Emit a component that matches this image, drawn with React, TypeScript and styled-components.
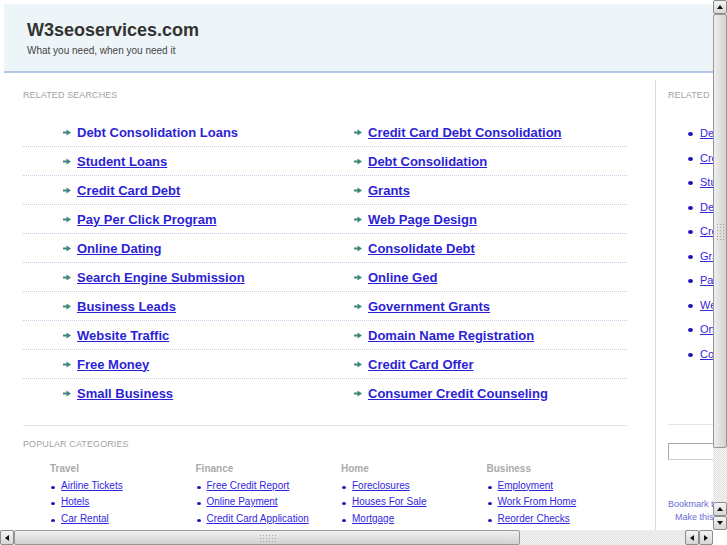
import React from "react";
import styled, { createGlobalStyle } from "styled-components";

// styles
const GlobalStyle = createGlobalStyle`
  html, body {
    margin: 0;
    padding: 0;
    overflow: hidden;
    background: #ffffff;
  }
  body {
    font-family: "Liberation Sans", Arial, sans-serif;
  }
`;

const Window = styled.div`
  display: grid;
  grid-template-columns: 713px 14px;
  grid-template-rows: 530px 15px;
  width: 727px;
  height: 545px;
  background: #ffffff;
`;

const Viewport = styled.div`
  overflow: hidden;
  position: relative;
`;

const Page = styled.div`
  width: 900px;
`;

const Header = styled.header`
  margin: 4px 0 0 4px;
  height: 69px;
  padding: 16px 0 0 23px;
  box-sizing: border-box;
  background: #eef5f8;
  border-bottom: 2px solid #b6c8e9;
`;

const SiteTitle = styled.h1`
  margin: 0;
  font-size: 18px;
  font-weight: 700;
  color: #333333;
  line-height: normal;
`;

const Tagline = styled.p`
  margin: 4px 0 0;
  font-size: 10px;
  color: #444444;
`;

const Columns = styled.div`
  display: flex;
  margin-top: 7px;
`;

const Main = styled.main`
  width: 655px;
  flex: none;
  box-sizing: border-box;
  padding: 10px 28px 0 23px;
`;

const Sidebar = styled.aside`
  width: 240px;
  min-height: 460px;
  border-left: 1px solid #d5def0;
  padding: 10px 0 0 12px;
`;

const SectionLabel = styled.div`
  font-size: 9px;
  letter-spacing: 0.1px;
  text-transform: uppercase;
  color: #a3a3a3;
`;

const SearchRows = styled.div`
  margin-top: 18px;
`;

const SearchRow = styled.div<{ $last?: boolean }>`
  display: grid;
  grid-template-columns: 291px 1fr;
  height: 28px;
  padding-left: 40px;
  border-bottom: 1px dotted ${(p) => (p.$last ? "transparent" : "#c2d0ea")};
`;

const SearchCell = styled.div`
  display: flex;
  align-items: center;
  gap: 6px;
`;

const SearchLink = styled.a<{ $plain?: boolean }>`
  font-size: 13px;
  font-weight: 700;
  color: #2c1fd6;
  text-decoration: ${(p) => (p.$plain ? "none" : "underline")};
  white-space: nowrap;
`;

const Rule = styled.div`
  height: 1px;
  background: #dde6ef;
`;

const MainRule = styled(Rule)`
  margin-top: 17px;
`;

const PopularLabel = styled(SectionLabel)`
  margin-top: 13px;
`;

const CategoryGrid = styled.div`
  display: grid;
  grid-template-columns: repeat(4, 145.5px);
  padding-left: 27px;
  margin-top: 12px;
`;

const CategoryTitle = styled.div`
  font-size: 10px;
  font-weight: 700;
  color: #aaaaaa;
  line-height: 16.5px;
`;

const CategoryList = styled.ul`
  list-style: none;
  margin: 0;
  padding: 0;
`;

const CategoryItem = styled.li`
  position: relative;
  padding-left: 11px;
  line-height: 16.5px;
  font-size: 10px;

  &::before {
    content: "";
    position: absolute;
    left: 1px;
    top: 8px;
    width: 4px;
    height: 3px;
    border-radius: 50%;
    background: #1d14b8;
  }
`;

const SmallLink = styled.a`
  color: #3326df;
  text-decoration: underline;
  white-space: nowrap;
`;

const SideList = styled.ul`
  list-style: none;
  margin: 21px 0 0;
  padding: 0 0 0 20px;
`;

const SideItem = styled.li`
  position: relative;
  padding-left: 12px;
  height: 24.5px;
  line-height: 24.5px;
  font-size: 11px;

  &::before {
    content: "";
    position: absolute;
    left: 0;
    top: 11px;
    width: 5px;
    height: 4px;
    border-radius: 50%;
    background: #1d14b8;
  }
`;

const SideRule = styled(Rule)`
  margin-top: 58px;
`;

const SearchInput = styled.input`
  display: block;
  margin-top: 18px;
  width: 160px;
  height: 17px;
  box-sizing: border-box;
  border: 1px solid #a9a9a9;
  border-bottom-color: #cfcfcf;
  padding: 0 3px;
  font-family: inherit;
  font-size: 11px;
`;

const BookmarkLine = styled.div<{ $indent?: number }>`
  font-size: 9px;
  line-height: 13px;
  color: #6d6bd9;
  padding-left: ${(p) => p.$indent ?? 0}px;
  white-space: nowrap;
`;

const BookmarkBlock = styled.div`
  margin-top: 38px;
`;

// scrollbars
const VScroll = styled.div`
  display: flex;
  flex-direction: column;
  background: repeating-conic-gradient(#e3e3e3 0 25%, #f3f3f3 0 50%) 0 0 / 2px 2px;
`;

const HScroll = styled.div`
  display: flex;
  background: repeating-conic-gradient(#e3e3e3 0 25%, #f3f3f3 0 50%) 0 0 / 2px 2px;
`;

const Spacer = styled.div`
  flex: 1;
`;

const Corner = styled.div`
  background: #ffffff;
`;

type Dir = "up" | "down" | "left" | "right";

const triangle = (dir: Dir) => {
  switch (dir) {
    case "up":
      return "border-width: 0 3.5px 4px 3.5px; border-bottom-color: #111;";
    case "down":
      return "border-width: 4px 3.5px 0 3.5px; border-top-color: #111;";
    case "left":
      return "border-width: 3.5px 4px 3.5px 0; border-right-color: #111;";
    default:
      return "border-width: 3.5px 0 3.5px 4px; border-left-color: #111;";
  }
};

const ScrollButton = styled.div<{ $dir: Dir }>`
  flex: none;
  width: 14px;
  height: ${(p) => (p.$dir === "left" || p.$dir === "right" ? "15px" : "14px")};
  box-sizing: border-box;
  border: 1px solid #8d8d8d;
  border-radius: 2px;
  background: linear-gradient(#f5f5f5, #d6d6d6);
  display: flex;
  align-items: center;
  justify-content: center;

  &::after {
    content: "";
    width: 0;
    height: 0;
    border-style: solid;
    border-color: transparent;
    ${(p) => triangle(p.$dir)}
  }
`;

const Thumb = styled.div<{ $horizontal?: boolean; $size: number }>`
  flex: none;
  box-sizing: border-box;
  ${(p) => (p.$horizontal ? `width: ${p.$size}px;` : `height: ${p.$size}px;`)}
  border: 1px solid #979797;
  border-radius: 2px;
  display: flex;
  align-items: center;
  justify-content: center;
  background: ${(p) =>
    p.$horizontal
      ? "linear-gradient(#efefef, #d2d2d2)"
      : "linear-gradient(to right, #efefef, #d2d2d2)"};
`;

const Grip = styled.div<{ $horizontal?: boolean }>`
  width: ${(p) => (p.$horizontal ? "17px" : "8px")};
  height: ${(p) => (p.$horizontal ? "8px" : "17px")};
  background: radial-gradient(circle, #a5a5a5 0.7px, transparent 0.9px) 0 0 / 3px 3px;
`;

// icons
const Arrow = () => (
  <svg width="8" height="7" viewBox="0 0 8 7" aria-hidden="true">
    <rect x="0" y="2.5" width="4" height="2" fill="#3f877d" />
    <polygon points="3.5,0.5 8,3.5 3.5,6.5" fill="#3f877d" />
  </svg>
);

// data
const searches: [string, string][] = [
  ["Debt Consolidation Loans", "Credit Card Debt Consolidation"],
  ["Student Loans", "Debt Consolidation"],
  ["Credit Card Debt", "Grants"],
  ["Pay Per Click Program", "Web Page Design"],
  ["Online Dating", "Consolidate Debt"],
  ["Search Engine Submission", "Online Ged"],
  ["Business Leads", "Government Grants"],
  ["Website Traffic", "Domain Name Registration"],
  ["Free Money", "Credit Card Offer"],
  ["Small Business", "Consumer Credit Counseling"],
];

const categories = [
  { title: "Travel", links: ["Airline Tickets", "Hotels", "Car Rental"] },
  { title: "Finance", links: ["Free Credit Report", "Online Payment", "Credit Card Application"] },
  { title: "Home", links: ["Foreclosures", "Houses For Sale", "Mortgage"] },
  { title: "Business", links: ["Employment", "Work From Home", "Reorder Checks"] },
];

const sideLinks = [
  "Debt Consolidation Loans",
  "Credit Card Debt Consolidation",
  "Student Loans",
  "Debt Consolidation",
  "Credit Card Debt",
  "Grants",
  "Pay Per Click Program",
  "Web Page Design",
  "Online Dating",
  "Consolidate Debt",
];

// component
const App: React.FC = () => {
  return (
    <>
      <GlobalStyle />
      <Window>
        <Viewport>
          <Page>
            <Header>
              <SiteTitle>W3seoservices.com</SiteTitle>
              <Tagline>What you need, when you need it</Tagline>
            </Header>
            <Columns>
              <Main>
                <SectionLabel>Related Searches</SectionLabel>
                <SearchRows>
                  {searches.map(([left, right], i) => (
                    <SearchRow key={left} $last={i === searches.length - 1}>
                      <SearchCell>
                        <Arrow />
                        <SearchLink href="#" $plain={i === 0}>
                          {left}
                        </SearchLink>
                      </SearchCell>
                      <SearchCell>
                        <Arrow />
                        <SearchLink href="#">{right}</SearchLink>
                      </SearchCell>
                    </SearchRow>
                  ))}
                </SearchRows>
                <MainRule />
                <PopularLabel>Popular Categories</PopularLabel>
                <CategoryGrid>
                  {categories.map((cat) => (
                    <div key={cat.title}>
                      <CategoryTitle>{cat.title}</CategoryTitle>
                      <CategoryList>
                        {cat.links.map((link) => (
                          <CategoryItem key={link}>
                            <SmallLink href="#">{link}</SmallLink>
                          </CategoryItem>
                        ))}
                      </CategoryList>
                    </div>
                  ))}
                </CategoryGrid>
              </Main>
              <Sidebar>
                <SectionLabel>Related Searches</SectionLabel>
                <SideList>
                  {sideLinks.map((link) => (
                    <SideItem key={link}>
                      <SmallLink href="#">{link}</SmallLink>
                    </SideItem>
                  ))}
                </SideList>
                <SideRule />
                <SearchInput type="text" />
                <BookmarkBlock>
                  <BookmarkLine>Bookmark this page</BookmarkLine>
                  <BookmarkLine $indent={7}>Make this your homepage</BookmarkLine>
                </BookmarkBlock>
              </Sidebar>
            </Columns>
          </Page>
        </Viewport>
        <VScroll>
          <ScrollButton $dir="up" />
          <Thumb $size={434}>
            <Grip />
          </Thumb>
          <Spacer />
          <ScrollButton $dir="up" />
          <ScrollButton $dir="down" />
        </VScroll>
        <HScroll>
          <ScrollButton $dir="left" />
          <Thumb $horizontal $size={506}>
            <Grip $horizontal />
          </Thumb>
          <Spacer />
          <ScrollButton $dir="left" />
          <ScrollButton $dir="right" />
        </HScroll>
        <Corner />
      </Window>
    </>
  );
};

export default App;
